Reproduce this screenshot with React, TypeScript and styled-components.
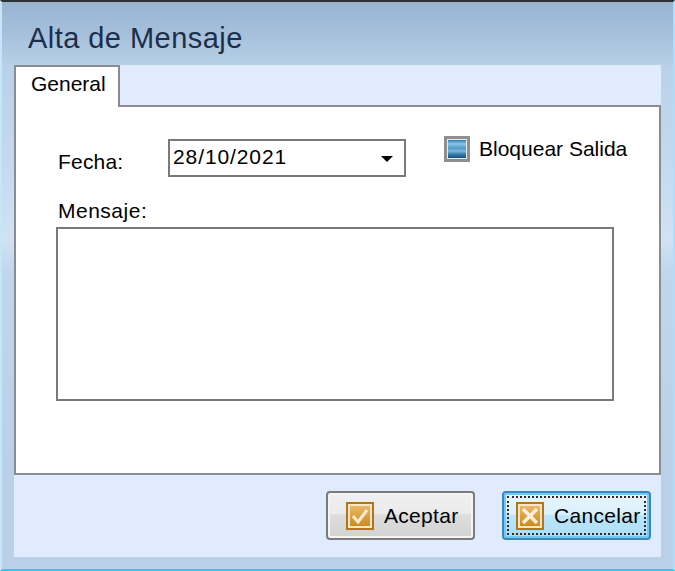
import React from "react";
import styled, { createGlobalStyle } from "styled-components";

const Global = createGlobalStyle`
  html, body { margin: 0; padding: 0; width: 675px; height: 571px; overflow: hidden; background: #fff; }
  #root { width: 675px; height: 571px; }
  * { box-sizing: border-box; }
`;

const Frame = styled.div`
  width: 675px;
  height: 571px;
  display: flex;
  flex-direction: column;
  border-top: 2px solid #2f3033;
  border-left: 2px solid #c4e6f6;
  border-right: 2px solid #a9e2f5;
  border-bottom: 2px solid #2ccdea;
  padding: 1px 12px 12px 12px;
  background: linear-gradient(
    180deg,
    #99b4d1 0,
    #a5bfdb 30px,
    #b9d1e9 66px,
    #c4d9ef 160px,
    #d0e2f4 238px,
    #c0d6ed 270px,
    #b9d0e8 480px,
    #b9d0e8 100%
  );
  font-family: "Liberation Sans", Arial, sans-serif;
  color: #000;
`;

const Title = styled.h1`
  margin: 0;
  height: 62px;
  padding: 17px 0 0 14px;
  font-size: 29px;
  line-height: 36px;
  font-weight: 400;
  letter-spacing: 0.45px;
  color: #1c2f4a;
`;

const TabControl = styled.div`
  flex: 1;
  width: 647px;
  background: #e0ecfd;
  display: flex;
  flex-direction: column;
`;

const TabStrip = styled.div`
  height: 40px;
  display: flex;
  align-items: flex-start;
`;

const Tab = styled.div`
  position: relative;
  z-index: 1;
  width: 106px;
  height: 42px;
  background: #fff;
  border: 2px solid #8a8c94;
  border-bottom: 0;
  padding: 3px 0 0 15px;
  font-size: 21px;
  line-height: 28px;
`;

const Page = styled.div`
  height: 370px;
  background: #fff;
  border: 2px solid #8a8c94;
  padding: 28px 0 0 40px;
`;

const TopRow = styled.div`
  display: flex;
  align-items: flex-start;
  padding-left: 2px;
`;

const FieldLabel = styled.label`
  display: block;
  width: 110px;
  padding-top: 14px;
  font-size: 21px;
  line-height: 26px;
  letter-spacing: 0.2px;
`;

const DateBox = styled.div`
  width: 238px;
  height: 38px;
  margin-top: 4px;
  border: 2px solid #7a7a7a;
  background: #fff;
  display: flex;
  align-items: center;
  justify-content: space-between;
  padding: 0 11px 2px 3px;
  font-size: 21px;
  letter-spacing: 0.9px;
`;

const Caret = styled.span`
  width: 0;
  height: 0;
  margin-top: 3px;
  border-left: 6px solid transparent;
  border-right: 6px solid transparent;
  border-top: 6px solid #000;
`;

const CheckField = styled.div`
  display: flex;
  align-items: center;
  gap: 9px;
  margin-left: 38px;
  font-size: 21px;
  line-height: 28px;
`;

const CheckBox = styled.span`
  width: 26px;
  height: 26px;
  border: 3px solid #8f8f8f;
  background: #e9e9e9;
  padding: 1px;
  display: block;
`;

const CheckFill = styled.span`
  display: block;
  width: 100%;
  height: 100%;
  background: linear-gradient(180deg, #2a80b5 0, #8cc6e6 22%, #4f9ccb 45%, #7fb6d6 62%, #2f7cab 80%, #1d4f78 100%);
`;

const MessageLabel = styled.label`
  display: block;
  margin-top: 21px;
  padding-left: 2px;
  font-size: 21px;
  line-height: 26px;
  letter-spacing: 0.5px;
`;

const MessageArea = styled.div`
  width: 558px;
  height: 174px;
  margin-top: 3px;
  border: 2px solid #7a7a7a;
  background: #fff;
`;

const Footer = styled.div`
  flex: 1;
  display: flex;
  justify-content: flex-end;
  align-items: flex-start;
  gap: 27px;
  padding: 16px 10px 0 0;
`;

const Button = styled.button<{ $focused?: boolean }>`
  position: relative;
  width: 149px;
  height: 49px;
  display: flex;
  align-items: center;
  gap: 10px;
  padding: 0 0 0 ${(p) => (p.$focused ? 12 : 18)}px;
  border-radius: 4px;
  border: 2px solid ${(p) => (p.$focused ? "#3c85bd" : "#7b7b7b")};
  box-shadow: inset 0 0 0 2px ${(p) => (p.$focused ? "#6fcbf3" : "#f4f4f4")};
  background: ${(p) =>
    p.$focused
      ? "linear-gradient(180deg, #e9f6fd 0, #d9f0fc 48%, #bde6fb 50%, #a9dcf7 100%)"
      : "linear-gradient(180deg, #f0f0f0 0, #ebebeb 46%, #dedede 48%, #d2d2d2 100%)"};
  font-family: "Liberation Sans", Arial, sans-serif;
  font-size: 21px;
  letter-spacing: 0.3px;
  color: #000;
`;

const FocusRing = styled.span`
  position: absolute;
  inset: 3px;
  border: 2px dotted #3a2a24;
  pointer-events: none;
`;

const IconBox = styled.svg`
  width: 28px;
  height: 28px;
  flex: none;
  display: block;
`;

const ActionIcon = ({ kind }: { kind: "check" | "cross" }) => (
  <IconBox viewBox="0 0 28 28">
    <defs>
      <linearGradient id={`g-${kind}`} x1="0" y1="0" x2="0" y2="1">
        <stop offset="0" stopColor="#eab765" />
        <stop offset="1" stopColor="#c98c1e" />
      </linearGradient>
    </defs>
    <rect x="0" y="0" width="28" height="28" fill="#b5741a" />
    <rect x="2" y="2" width="24" height="24" fill="#f7e6c8" />
    <rect x="4" y="4" width="20" height="20" fill={`url(#g-${kind})`} />
    {kind === "check" ? (
      <path d="M7 14l5 6 9-12" fill="none" stroke="#f6e9d2" strokeWidth="3" />
    ) : (
      <path d="M7 7l14 14M21 7L7 21" fill="none" stroke="#fbeedd" strokeWidth="3.5" />
    )}
  </IconBox>
);

export default function App() {
  return (
    <>
      <Global />
      <Frame>
        <Title>Alta de Mensaje</Title>
        <TabControl>
          <TabStrip>
            <Tab>General</Tab>
          </TabStrip>
          <Page>
            <TopRow>
              <FieldLabel>Fecha:</FieldLabel>
              <DateBox>
                28/10/2021
                <Caret />
              </DateBox>
              <CheckField>
                <CheckBox>
                  <CheckFill />
                </CheckBox>
                Bloquear Salida
              </CheckField>
            </TopRow>
            <MessageLabel>Mensaje:</MessageLabel>
            <MessageArea />
          </Page>
          <Footer>
            <Button>
              <ActionIcon kind="check" />
              Aceptar
            </Button>
            <Button $focused>
              <FocusRing />
              <ActionIcon kind="cross" />
              Cancelar
            </Button>
          </Footer>
        </TabControl>
      </Frame>
    </>
  );
}
